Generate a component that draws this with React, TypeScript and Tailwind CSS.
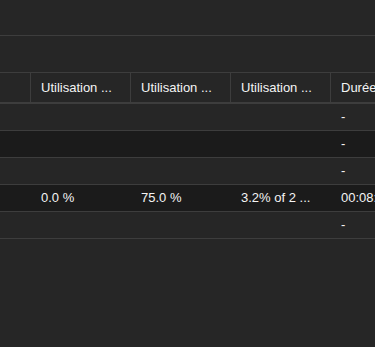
import React from 'react';

const columns = ['', 'Utilisation ...', 'Utilisation ...', 'Utilisation ...', 'Durée'];

const rows = [
  { id: 1, cells: ['', '', '', '', '-'] },
  { id: 2, cells: ['', '', '', '', '-'] },
  { id: 3, cells: ['', '', '', '', '-'] },
  { id: 4, cells: ['', '0.0 %', '75.0 %', '3.2% of 2 ...', '00:08:14'] },
  { id: 5, cells: ['', '', '', '', '-'] },
];

const gridCols = 'grid grid-cols-[31px_100px_100px_100px_100px] w-[431px]';

export default function App() {
  return (
    <div
      className="w-[375px] h-[347px] overflow-hidden bg-[#262626] text-[13px] text-[#f4f4f4]"
      style={{ fontFamily: '"Liberation Sans", Arial, sans-serif' }}
    >
      {/* Toolbar strips */}
      <div className="h-[36px] border-b border-[#3d3d3d]" />
      <div className="h-[37px] border-b border-[#3d3d3d]" />

      {/* Table header */}
      <div className={`${gridCols} h-[31px] border-b-2 border-[#3d3d3d]`}>
        {columns.map((col, i) => (
          <div
            key={i}
            className="flex items-center px-[10px] border-r border-[#3d3d3d] whitespace-nowrap overflow-hidden"
          >
            {col}
          </div>
        ))}
      </div>

      {/* Table body */}
      {rows.map((row, rIndex) => (
        <div
          key={row.id}
          className={`${gridCols} h-[27px] border-b border-[#3d3d3d] ${rIndex % 2 === 1 ? 'bg-[#1b1b1b]' : 'bg-[#262626]'}`}
        >
          {row.cells.map((cell, i) => (
            <div key={i} className="flex items-center px-[10px] whitespace-nowrap overflow-hidden">
              {cell}
            </div>
          ))}
        </div>
      ))}
    </div>
  );
}
